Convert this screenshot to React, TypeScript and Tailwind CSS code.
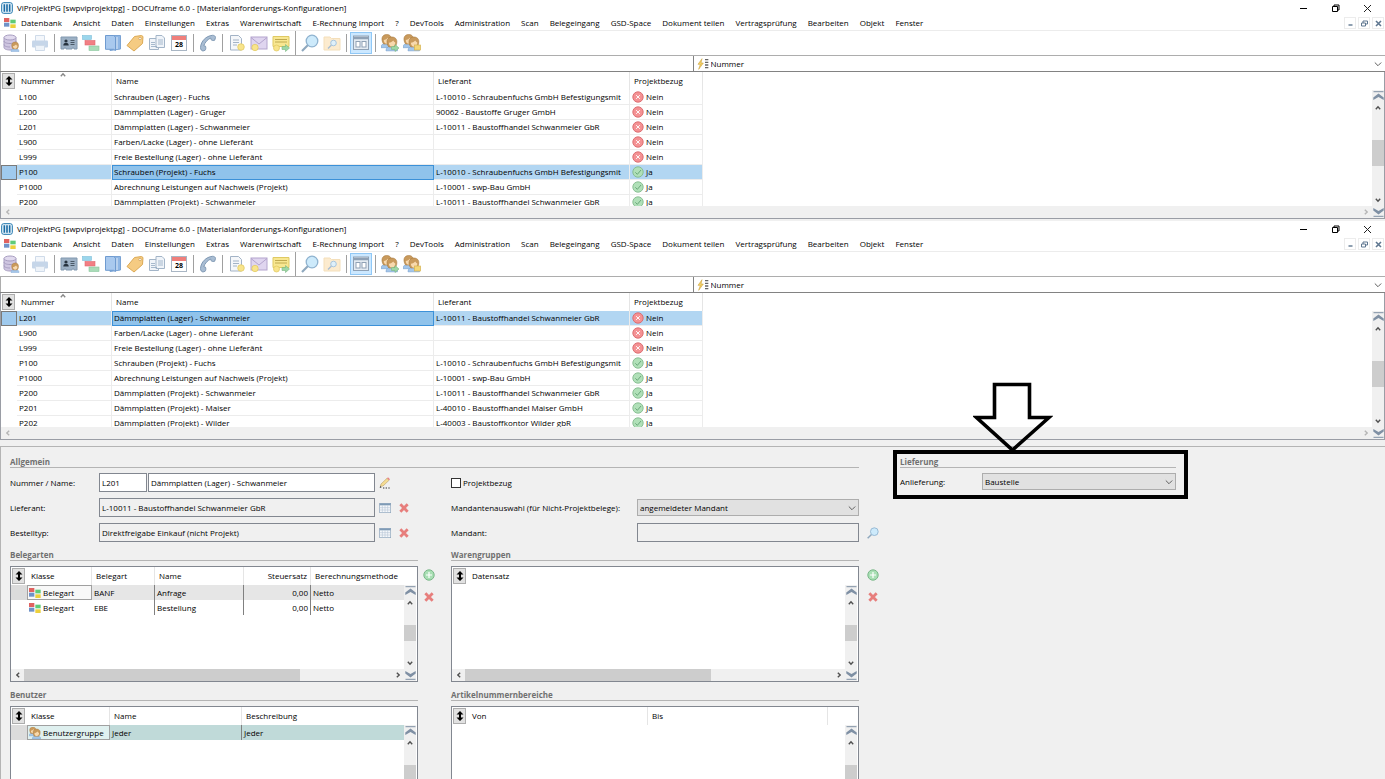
import type { ReactNode } from 'react'
import clsx from 'clsx'

interface Config {
  nummer: string
  name: string
  lieferant: string
  projekt: boolean
}

const configs: Config[] = [
  { nummer: 'L100', name: 'Schrauben (Lager) - Fuchs', lieferant: 'L-10010 - Schraubenfuchs GmbH Befestigungsmit', projekt: false },
  { nummer: 'L200', name: 'Dämmplatten (Lager) - Gruger', lieferant: '90062 - Baustoffe Gruger GmbH', projekt: false },
  { nummer: 'L201', name: 'Dämmplatten (Lager) - Schwanmeier', lieferant: 'L-10011 - Baustoffhandel Schwanmeier GbR', projekt: false },
  { nummer: 'L900', name: 'Farben/Lacke (Lager) - ohne Lieferânt', lieferant: '', projekt: false },
  { nummer: 'L999', name: 'Freie Bestellung (Lager) - ohne Lieferânt', lieferant: '', projekt: false },
  { nummer: 'P100', name: 'Schrauben (Projekt) - Fuchs', lieferant: 'L-10010 - Schraubenfuchs GmbH Befestigungsmit', projekt: true },
  { nummer: 'P1000', name: 'Abrechnung Leistungen auf Nachweis (Projekt)', lieferant: 'L-10001 - swp-Bau GmbH', projekt: true },
  { nummer: 'P200', name: 'Dämmplatten (Projekt) - Schwanmeier', lieferant: 'L-10011 - Baustoffhandel Schwanmeier GbR', projekt: true },
  { nummer: 'P201', name: 'Dämmplatten (Projekt) - Maiser', lieferant: 'L-40010 - Baustoffhandel Maiser GmbH', projekt: true },
  { nummer: 'P202', name: 'Dämmplatten (Projekt) - Wilder', lieferant: 'L-40003 - Baustoffkontor Wilder gbR', projekt: true }
]

const menu = [
  'Datenbank', 'Ansicht', 'Daten', 'Einstellungen', 'Extras', 'Warenwirtschaft',
  'E-Rechnung Import', '?', 'DevTools', 'Administration', 'Scan', 'Belegeingang',
  'GSD-Space', 'Dokument teilen', 'Vertragsprüfung', 'Bearbeiten', 'Objekt', 'Fenster'
]

/* ---------- Icons ---------- */

const Svg = ({ size = 18, children }: { size?: number; children: ReactNode }) => (
  <svg width={size} height={size} viewBox="0 0 18 18" fill="none" className="shrink-0" aria-hidden="true">
    {children}
  </svg>
)

const AppLogo = () => (
  <Svg size={12}>
    <rect x="1" y="1" width="16" height="16" rx="3" fill="#e8f3fa" stroke="#2478ae" strokeWidth="1.5" />
    <path d="M5 3.5v11M9 3.5v11M13 3.5v11" stroke="#1b6ca5" strokeWidth="2.4" />
  </Svg>
)

const Blocks = ({ size = 12 }: { size?: number }) => (
  <Svg size={size}>
    <rect x="0" y="1.500" width="8" height="6" fill="#e0625f" />
    <rect x="0" y="8.500" width="8" height="6" fill="#6f92c8" />
    <rect x="9.500" y="4" width="8" height="5.500" fill="#5fcb78" />
    <rect x="9.500" y="11" width="8" height="5.500" fill="#ecd03c" />
  </Svg>
)

const Person = ({ x, y, s }: { x: number; y: number; s: number }) => (
  <g transform={`translate(${x} ${y}) scale(${s})`}>
    <path d="M0 12c0-3 2-4 5-4s5 1 5 4z" fill="#a3c6ea" stroke="#7ba5d2" strokeWidth=".6" />
    <path d="M1 5.500C.3 1.800 2.500 0 5.200 0s4.800 1.800 4.100 5.500c-.3 1.800-1 2.700-1.800 3.200h-5C1.800 8 1.200 7 1 5.500z" fill="#c99a5c" stroke="#a87a41" strokeWidth=".5" />
    <path d="M2.500 5c1.500-.2 3-.9 3.800-2 .5.900 1 1.500 1.800 1.800 0 2-1.200 3.700-2.800 3.700S2.500 7 2.500 5z" fill="#f8d9ae" />
  </g>
)

const DatabaseIcon = () => (
  <Svg>
    <path d="M2 3.500v10C2 15 4.500 16 8 16s6-1 6-2.500v-10" fill="#cfc6e1" stroke="#a79dc0" />
    <ellipse cx="8" cy="3.500" rx="6" ry="2.500" fill="#e1daee" stroke="#a79dc0" />
    <path d="M2 7c0 1.500 2.500 2.500 6 2.500s6-1 6-2.500M2 10.500C2 12 4.500 13 8 13" stroke="#a79dc0" />
    <Person x={9} y={8} s={0.8} />
  </Svg>
)

const PrinterIcon = () => (
  <Svg>
    <path d="M4.500 1.500h9v6h-9z" fill="#f4f7fb" stroke="#cfdbe9" />
    <rect x="1" y="6.500" width="16" height="7" rx="1" fill="#c6d6e9" />
    <path d="M4.500 11.500h9v5h-9z" fill="#eef3f9" stroke="#cfdbe9" />
  </Svg>
)

const IdCardIcon = () => (
  <Svg>
    <path d="M1 3h16v12h-3v-1h-2v1H6v-1H4v1H1z" fill="#9db1c5" stroke="#8299b0" />
    <circle cx="6" cy="7" r="1.600" fill="#26323e" />
    <path d="M3.300 11.500c0-2 1-2.500 2.700-2.500s2.700.5 2.700 2.500z" fill="#26323e" />
    <path d="M10.500 6.500h4M10.500 8.500h4M10.500 10.500h4" stroke="#4a5967" />
  </Svg>
)

const LayersIcon = () => (
  <Svg>
    <rect x=".5" y="1.500" width="9" height="4" fill="#9bd6ec" stroke="#7dbfd9" strokeWidth=".6" />
    <rect x="3" y="6.500" width="10" height="4.500" fill="#f27f84" stroke="#e0686e" strokeWidth=".6" />
    <rect x="7" y="12" width="10" height="4.500" fill="#a9dcb8" stroke="#88c69c" strokeWidth=".6" />
  </Svg>
)

const BookIcon = () => (
  <Svg>
    <path d="M6 1.500h10.500v13.500L6 16.500z" fill="#8fb6e4" stroke="#7aa3d4" />
    <path d="M1.500 1.500h8l2 1.500v13.500l-2-1.200h-8z" fill="#a9c9ee" stroke="#6f9bd0" />
    <path d="M13 3v12" stroke="#dfeaf7" />
  </Svg>
)

const TagIcon = () => (
  <Svg>
    <path d="M1 11.500L8.500 2.500 15.500 1.500l1.500 1-.5 7L8 17z" fill="#f5cb82" stroke="#dba954" />
    <circle cx="14" cy="4.500" r="1.200" fill="#fff" stroke="#c08c3b" strokeWidth=".6" />
  </Svg>
)

const CopyIcon = () => (
  <Svg>
    <path d="M1.500 4.500h7l2 2v9h-9z" fill="#f0f4f9" stroke="#a3b5c8" />
    <path d="M8 1.500h6l2.500 2.500v9.500H8z" fill="#f0f4f9" stroke="#a3b5c8" />
    <path d="M10 6h5M10 8h5M10 10h5M3 8.500h4M3 10.500h4M3 12.500h6" stroke="#93a9c1" strokeWidth=".8" />
  </Svg>
)

const CalendarIcon = () => (
  <span className="flex h-4 w-4 flex-col border border-[#a9b6c4] bg-white">
    <span className="h-1 bg-[#f07f7b]" />
    <span className="text-center text-[7px] leading-[10px] font-bold">28</span>
  </span>
)

const PhoneIcon = () => (
  <Svg>
    <path
      d="M1.500 13.500C2 7 7 2 13.500 1.300c1.500 0 3 .7 3 2.200l-.8 2.700c-1 .6-2.700.3-3.700-.6l-.3-1.600C8.500 5.500 5.800 8.500 4.800 11.700l1.700.5c.5 1.300.4 3-.3 4l-2 .7c-1.500.2-2.800-1.500-2.700-3.400z"
      fill="#a9bdd3"
      stroke="#8099b4"
    />
  </Svg>
)

const DocIcon = () => (
  <Svg>
    <path d="M2.500 1.500h8l3 3v11.500h-11z" fill="#f5f7fa" stroke="#a3b3c6" />
    <path d="M5 6h6M5 8.500h6M5 11h4" stroke="#a3b3c6" />
    <circle cx="13" cy="13" r="3.300" fill="#f8e48c" stroke="#dfc75c" strokeWidth=".7" />
  </Svg>
)

const MailIcon = () => (
  <Svg>
    <rect x="1" y="3" width="16" height="12" fill="#dfd5ef" stroke="#b3a4cd" />
    <path d="M1 3.500l8 6.500 8-6.500" stroke="#b3a4cd" />
    <circle cx="5" cy="13.500" r="3.200" fill="#f8e48c" stroke="#dfc75c" strokeWidth=".7" />
  </Svg>
)

const NoteIcon = () => (
  <Svg>
    <path d="M1 2.500h16v10H1z" fill="#f8e791" stroke="#dfc963" />
    <path d="M3 5.500h12M3 8h12" stroke="#c0aa50" />
    <circle cx="4.500" cy="14" r="3" fill="#f8e48c" stroke="#dfc75c" strokeWidth=".7" />
    <path d="M10 12.500h3.500v-2l4 3.500-4 3.500v-2H10z" fill="#9dd7a5" stroke="#78b782" strokeWidth=".6" />
  </Svg>
)

const SearchIcon = ({ size = 18 }: { size?: number }) => (
  <Svg size={size}>
    <path d="M7.500 10.500L1 17" stroke="#8fa8be" strokeWidth="2.200" />
    <circle cx="11" cy="7" r="5.800" fill="#cdeafb" stroke="#8fb3d0" strokeWidth="1.300" />
  </Svg>
)

const FolderSearchIcon = () => (
  <Svg>
    <path d="M1 3h6l1.500 1.500H17V16H1z" fill="#fcebcf" stroke="#f4dfba" />
    <path d="M8.500 11L5 14.500" stroke="#a9bfd3" strokeWidth="1.500" />
    <circle cx="10.500" cy="9" r="2.800" fill="#dff0fa" stroke="#a9c6de" />
  </Svg>
)

const LayoutIcon = () => (
  <Svg>
    <rect x="1.500" y="2" width="15" height="13.500" fill="#e4ebf2" stroke="#8fa1b5" />
    <path d="M2 4h14" stroke="#8fa1b5" strokeWidth="2.500" />
    <rect x="4" y="7.500" width="4" height="5.500" fill="#fff" stroke="#8fa1b5" />
    <rect x="10" y="7.500" width="4" height="5.500" fill="#fff" stroke="#8fa1b5" />
  </Svg>
)

const UsersIcon = ({ locked = false }: { locked?: boolean }) => (
  <Svg>
    <Person x={0} y={0.5} s={1.1} />
    <Person x={5} y={3} s={1.15} />
    {locked ? (
      <rect x="11.500" y="11" width="6" height="5" fill="#f3d676" stroke="#d6b350" strokeWidth=".7" />
    ) : (
      <path d="M10.500 12.500h3.500v-2l4 3.500-4 3.500v-2h-3.500z" fill="#9dd7a5" stroke="#78b782" strokeWidth=".6" />
    )}
  </Svg>
)

const UserGroupIcon = () => (
  <Svg size={12}>
    <Person x={0} y={0} s={1.1} />
    <Person x={5} y={3} s={1.25} />
  </Svg>
)

const SortFlash = () => (
  <Svg size={12}>
    <path d="M7.500 1L1.500 9.500h3.500L2.500 17l7-9.500H6z" fill="#f5d268" stroke="#c79a2f" strokeWidth=".8" />
    <path d="M12 2.500h5M12 6.500h5M12 10.500h5M12 14.500h5" stroke="#666" strokeWidth="2" />
  </Svg>
)

const StatusIcon = ({ ok }: { ok: boolean }) => (
  <Svg size={12}>
    <circle cx="9" cy="9" r="7.800" fill={ok ? '#b0e0b8' : '#f49294'} stroke={ok ? '#7fb88a' : '#d96568'} strokeWidth="1.300" />
    {ok ? (
      <path d="M5 9.500l3 3 5.500-6.500" stroke="#5f9f70" strokeWidth="1.300" />
    ) : (
      <path d="M6.200 6.200l5.600 5.600M11.800 6.200l-5.600 5.600" stroke="#fff" strokeWidth="1.400" />
    )}
  </Svg>
)

const AddIcon = () => (
  <Svg size={12}>
    <circle cx="9" cy="9" r="7.800" fill="#a9dfb4" stroke="#74b383" strokeWidth="1.400" />
    <path d="M9 4.500v9M4.500 9h9" stroke="#fff" strokeWidth="1.800" />
  </Svg>
)

const DeleteIcon = () => (
  <Svg size={12}>
    <path d="M3.500 3.500l11 11M14.500 3.500l-11 11" stroke="#e77e7c" strokeWidth="4.200" />
  </Svg>
)

const GridIcon = () => (
  <Svg size={12}>
    <rect x="1" y="2" width="16.500" height="14" fill="#f5f8fb" stroke="#8ba3bb" />
    <path d="M1 3.500h16.500" stroke="#7f9bb6" strokeWidth="3" />
    <path d="M5 5v11M9 5v11M13 5v11M1 8.500h16M1 12h16" stroke="#b5c5d5" strokeWidth=".9" />
  </Svg>
)

const PencilIcon = () => (
  <Svg size={12}>
    <path d="M2 14l1-3.500L12 2l3 3-9 8.500z" fill="#f5dc92" stroke="#b8a06a" strokeWidth=".9" />
    <path d="M12 2l1.500-1.500 3 3L15 5z" fill="#e88080" />
    <path d="M1 16.500l1-3 2 2z" fill="#333" />
    <path d="M6 16.500h2M10 16.500h2M14 16.500h2" stroke="#333" strokeWidth="1.600" />
  </Svg>
)

type Direction = 'up' | 'down' | 'left' | 'right'

const rotations: Record<Direction, string> = {
  up: 'rotate-0',
  down: 'rotate-180',
  left: '-rotate-90',
  right: 'rotate-90'
}

const Chevron = ({ dir, className = 'text-[#505050]' }: { dir: Direction; className?: string }) => (
  <svg width="6" height="6" viewBox="0 0 6 6" fill="none" className={clsx(rotations[dir], className)} aria-hidden="true">
    <path d="M.8 4.200L3 1.800l2.200 2.400" stroke="currentColor" strokeWidth="1.400" />
  </svg>
)

const SelectArrow = () => (
  <svg width="8" height="6" viewBox="0 0 8 6" fill="none" aria-hidden="true">
    <path d="M.8 1.500L4 4.700l3.200-3.200" stroke="#606060" />
  </svg>
)

const PageChevron = ({ dir }: { dir: Direction }) => (
  <svg width="11" height="10" viewBox="0 0 11 10" fill="none" className={rotations[dir]} aria-hidden="true">
    <path d="M.5.7h10" stroke="#7f90a4" />
    <path d="M.3 9v-2.500L5.500 2.500l5.200 4V9L5.500 6z" fill="#7f90a4" />
  </svg>
)

/* ---------- Scrollbars ---------- */

const VScroll = ({ thumb }: { thumb: string }) => (
  <div className="flex w-3 shrink-0 flex-col bg-[#f0f0f0]">
    <button aria-label="Zum Anfang" className="flex h-3 items-center justify-center">
      <PageChevron dir="up" />
    </button>
    <button aria-label="Nach oben" className="flex h-3 items-center justify-center">
      <Chevron dir="up" />
    </button>
    <div className="flex-1">
      <div className={clsx('bg-[#cdcdcd]', thumb)} />
    </div>
    <button aria-label="Nach unten" className="flex h-3 items-center justify-center">
      <Chevron dir="down" />
    </button>
    <button aria-label="Zum Ende" className="flex h-3 items-center justify-center">
      <PageChevron dir="down" />
    </button>
  </div>
)

const HScroll = ({ thumb, disabled = false }: { thumb?: string; disabled?: boolean }) => (
  <div className="flex h-3 items-center bg-[#f0f0f0]">
    <button aria-label="Nach links" disabled={disabled} className="flex w-[13px] justify-center">
      <Chevron dir="left" className={disabled ? 'text-[#b5b5b5]' : undefined} />
    </button>
    <div className="h-full flex-1">
      {thumb && <div className={clsx('h-full bg-[#cdcdcd]', thumb)} />}
    </div>
    <button aria-label="Nach rechts" disabled={disabled} className="flex w-[13px] justify-center">
      <Chevron dir="right" className={disabled ? 'text-[#b5b5b5]' : undefined} />
    </button>
  </div>
)

const SortButton = () => (
  <button aria-label="Sortieren" className="mx-px flex h-4 w-[13px] items-center justify-center border border-[#adadad] bg-[#e1e1e1]">
    <svg width="8" height="10" viewBox="0 0 8 10" aria-hidden="true">
      <path d="M4 0l3.500 3.500H5v3h2.500L4 10 .5 6.500H3v-3H.5z" fill="#000" />
    </svg>
  </button>
)

/* ---------- Main window ---------- */

const ToolSep = ({ tall = false }: { tall?: boolean }) => (
  <span className={clsx('mx-[3px] w-px bg-[#a0a0a0]', tall ? 'h-6' : 'h-[18px]')} />
)

const Tool = ({ label, active = false, disabled = false, children }: { label: string; active?: boolean; disabled?: boolean; children: ReactNode }) => (
  <button
    aria-label={label}
    disabled={disabled}
    className={clsx('flex h-[22px] w-[22px] items-center justify-center', active && 'border border-[#90c8f6] bg-[#cce8ff]')}
  >
    {children}
  </button>
)

const Toolbar = () => (
  <div className="flex h-6 items-center">
    <Tool label="Datenbank"><DatabaseIcon /></Tool>
    <ToolSep />
    <Tool label="Drucken" disabled><PrinterIcon /></Tool>
    <ToolSep />
    <Tool label="Adressen"><IdCardIcon /></Tool>
    <Tool label="Ebenen"><LayersIcon /></Tool>
    <Tool label="Buch"><BookIcon /></Tool>
    <Tool label="Artikel"><TagIcon /></Tool>
    <Tool label="Belege"><CopyIcon /></Tool>
    <Tool label="Kalender"><CalendarIcon /></Tool>
    <ToolSep />
    <Tool label="Telefon"><PhoneIcon /></Tool>
    <ToolSep />
    <Tool label="Neues Dokument"><DocIcon /></Tool>
    <Tool label="Neue E-Mail"><MailIcon /></Tool>
    <Tool label="Neue Notiz"><NoteIcon /></Tool>
    <ToolSep tall />
    <Tool label="Suchen"><SearchIcon /></Tool>
    <Tool label="Ordner durchsuchen" disabled><FolderSearchIcon /></Tool>
    <ToolSep />
    <Tool label="Ansicht" active><LayoutIcon /></Tool>
    <ToolSep />
    <Tool label="Benutzer wechseln"><UsersIcon /></Tool>
    <Tool label="Benutzerrechte"><UsersIcon locked /></Tool>
  </div>
)

const headCell = 'border-r border-[#e5e5e5] pl-1 text-left font-normal'
const bodyCell = 'truncate border-r border-b border-[#ececec] pl-[2px] text-clip'

const ConfigWindow = ({ rows, selected }: { rows: Config[]; selected: string }) => (
  <section className="bg-white">
    <header className="flex h-4 items-center pl-px">
      <AppLogo />
      <h1 className="flex-1 pl-1">ViProjektPG [swpviprojektpg] - DOCUframe 6.0 - [Materialanforderungs-Konfigurationen]</h1>
      <div className="flex pr-[2px]">
        <button aria-label="Minimieren" className="flex h-4 w-8 items-center justify-center">
          <svg width="9" height="9" viewBox="0 0 9 9"><path d="M1 4.500h7" stroke="#000" /></svg>
        </button>
        <button aria-label="Wiederherstellen" className="flex h-4 w-8 items-center justify-center">
          <svg width="9" height="9" viewBox="0 0 9 9" fill="none" stroke="#000"><path d="M1.500 2.500h5v5h-5zM3 2.500v-1.500h5v5H6.500" /></svg>
        </button>
        <button aria-label="Schließen" className="flex h-4 w-8 items-center justify-center">
          <svg width="9" height="9" viewBox="0 0 9 9" fill="none" stroke="#222"><path d="M1 1l7 7M8 1L1 8" /></svg>
        </button>
      </div>
    </header>

    <div className="flex h-[15px] items-center border-b border-[#ececec] pr-px pl-1">
      <Blocks />
      <nav className="flex flex-1 gap-[11px] pl-[5px]">
        {menu.map(item => <button key={item}>{item}</button>)}
      </nav>
      <div className="flex gap-[2px] text-[#5f7790]">
        <button aria-label="Fenster minimieren" className="flex h-3 w-3 items-center justify-center border border-[#ececec]">
          <svg width="7" height="7" viewBox="0 0 7 7"><path d="M1.500 5h4" stroke="currentColor" strokeWidth="1.400" /></svg>
        </button>
        <button aria-label="Fenster wiederherstellen" className="flex h-3 w-3 items-center justify-center border border-[#ececec]">
          <svg width="7" height="7" viewBox="0 0 7 7" fill="none" stroke="currentColor"><path d="M.5 3h4v3h-4zM2 3V1h4.500v3H5" /></svg>
        </button>
        <button aria-label="Fenster schließen" className="flex h-3 w-3 items-center justify-center border border-[#ececec]">
          <svg width="7" height="7" viewBox="0 0 7 7"><path d="M1 1l5 5M6 1L1 6" stroke="currentColor" strokeWidth="1.600" /></svg>
        </button>
      </div>
    </div>

    <Toolbar />

    <div className="flex h-[17px] border-t border-b border-t-[#adadad] border-b-[#828282]">
      <input aria-label="Suchbegriff" className="w-1/2 border-l border-[#adadad] px-1 outline-none" />
      <div className="relative flex w-1/2 items-center border-l border-[#828282] pl-[3px]">
        <SortFlash />
        <select aria-label="Suchfeld" className="h-full flex-1 appearance-none pl-[2px] outline-none">
          <option>Nummer</option>
        </select>
        <span className="pointer-events-none absolute right-[3px]">
          <SelectArrow />
        </span>
      </div>
    </div>

    <div className="flex border-x border-b border-[#9a9da5]">
      <div className="min-w-0 flex-1">
        <div className="h-[134px] overflow-hidden">
          <table className="w-[702px] table-fixed border-separate border-spacing-0">
            <colgroup>
              <col className="w-4" />
              <col className="w-[95px]" />
              <col className="w-[322px]" />
              <col className="w-[196px]" />
              <col className="w-[73px]" />
            </colgroup>
            <thead>
              <tr className="h-[18px]">
                <th className="p-0"><SortButton /></th>
                <th className={headCell}>
                  <span className="relative">
                    Nummer
                    <span className="absolute -top-[3px] -right-[11px]"><Chevron dir="up" className="text-[#888]" /></span>
                  </span>
                </th>
                <th className={headCell}>Name</th>
                <th className={headCell}>Lieferant</th>
                <th className={headCell}>Projektbezug</th>
              </tr>
            </thead>
            <tbody>
              {rows.map(row => {
                const active = row.nummer === selected
                return (
                  <tr key={row.nummer} className={clsx('h-[15px]', active && 'bg-[#b2d6f2]')}>
                    <td className={clsx('p-0', active && 'bg-[#9fcaee] outline outline-1 -outline-offset-1 outline-[#7a7a7a]')} />
                    <td className={bodyCell}>{row.nummer}</td>
                    <td className={clsx(bodyCell, active && 'bg-[#90c3eb] outline outline-1 -outline-offset-1 outline-[#3c91d8]')}>
                      {row.name}
                    </td>
                    <td className={bodyCell}>{row.lieferant}</td>
                    <td className={bodyCell}>
                      <span className="flex items-center gap-[2px]">
                        <StatusIcon ok={row.projekt} />
                        {row.projekt ? 'Ja' : 'Nein'}
                      </span>
                    </td>
                  </tr>
                )
              })}
            </tbody>
          </table>
        </div>
        <HScroll disabled />
      </div>
      <div className="flex pt-[18px]">
        <VScroll thumb="mt-[26px] h-[26px]" />
      </div>
    </div>
  </section>
)

/* ---------- Form ---------- */

const Heading = ({ children }: { children: ReactNode }) => (
  <h2 className="border-b border-[#b4b4b4] leading-[11px] font-bold text-[#707070]">{children}</h2>
)

const Picker = ({ children, label }: { children: ReactNode; label: string }) => (
  <button aria-label={label} className="flex w-3 shrink-0 items-center justify-center">{children}</button>
)

const field = 'h-full min-w-0 border border-[#828790] px-[2px] outline-none'

const Select = ({ id, value }: { id: string; value: string }) => (
  <div className="relative flex h-[17px] min-w-0 flex-1 items-center">
    <select id={id} className="h-full w-full appearance-none border border-[#adadad] bg-[#e1e1e1] px-[2px] outline-none">
      <option>{value}</option>
    </select>
    <span className="pointer-events-none absolute right-[3px]">
      <SelectArrow />
    </span>
  </div>
)

const ListBox = ({ children, thumb, sideGap, actions = false }: { children: ReactNode; thumb?: string; sideGap: string; actions?: boolean }) => (
  <div className={clsx('mt-[5px] flex', sideGap)}>
    <div className="flex w-[408px] border border-[#828790] bg-white">
      <div className="min-w-0 flex-1">
        <div className="h-[102px]">{children}</div>
        <HScroll thumb={thumb} />
      </div>
      <div className="flex pt-[18px] pr-px">
        <VScroll thumb="mt-4 h-4" />
      </div>
    </div>
    {actions && (
      <div className="flex flex-col gap-[10px] pt-[3px]">
        <Picker label="Hinzufügen"><AddIcon /></Picker>
        <Picker label="Entfernen"><DeleteIcon /></Picker>
      </div>
    )}
  </div>
)

const belegarten = [
  { art: 'BANF', name: 'Anfrage' },
  { art: 'EBE', name: 'Bestellung' }
]

const Belegarten = () => (
  <table className="w-full table-fixed border-separate border-spacing-0">
    <colgroup>
      <col className="w-4" />
      <col className="w-[65px]" />
      <col className="w-[63px]" />
      <col className="w-[89px]" />
      <col className="w-[67px]" />
      <col />
    </colgroup>
    <thead>
      <tr className="h-[18px]">
        <th className="p-0"><SortButton /></th>
        <th className={headCell}>Klasse</th>
        <th className={headCell}>Belegart</th>
        <th className={headCell}>Name</th>
        <th className="border-r border-[#e5e5e5] pr-[3px] text-right font-normal">Steuersatz</th>
        <th className="pl-1 text-left font-normal">Berechnungsmethode</th>
      </tr>
    </thead>
    <tbody>
      {belegarten.map((row, i) => (
        <tr key={row.art} className={clsx('h-[15px]', i === 0 && 'bg-[#e6e6e6]')}>
          <td className={clsx(i === 0 && 'bg-[#dcdcdc]')} />
          <td className={clsx('pl-[2px]', i === 0 && 'bg-[#f8f8f8] outline outline-1 -outline-offset-1 outline-[#a0a0a0]')}>
            <span className="flex items-center gap-[2px]">
              <Blocks />
              Belegart
            </span>
          </td>
          <td className="border-r border-[#808080] pl-[2px]">{row.art}</td>
          <td className="border-r border-[#808080] pl-[2px]">{row.name}</td>
          <td className="border-r border-[#808080] pr-[2px] text-right">0,00</td>
          <td className="pl-[2px]">Netto</td>
        </tr>
      ))}
    </tbody>
  </table>
)

const Benutzer = () => (
  <table className="w-full table-fixed border-separate border-spacing-0">
    <colgroup>
      <col className="w-4" />
      <col className="w-[83px]" />
      <col className="w-[132px]" />
      <col />
    </colgroup>
    <thead>
      <tr className="h-[18px]">
        <th className="p-0"><SortButton /></th>
        <th className={headCell}>Klasse</th>
        <th className={headCell}>Name</th>
        <th className="pl-1 text-left font-normal">Beschreibung</th>
      </tr>
    </thead>
    <tbody>
      <tr className="h-[15px] bg-[#c0dad9]">
        <td className="bg-[#dcdcdc]" />
        <td className="bg-[#dff0ef] pl-[2px] outline outline-1 -outline-offset-1 outline-[#a0a0a0]">
          <span className="flex items-center gap-[2px]">
            <UserGroupIcon />
            Benutzergruppe
          </span>
        </td>
        <td className="border-r border-[#808080] pl-[2px]">Jeder</td>
        <td className="pl-[2px]">Jeder</td>
      </tr>
    </tbody>
  </table>
)

const ConfigForm = () => (
  <form className="flex flex-1 border-t border-l border-[#b4b4b4] bg-[#f0f0f0] pt-[9px] pl-[9px]" onSubmit={e => e.preventDefault()}>
    <div>
      <div className="w-[849px]">
        <Heading>Allgemein</Heading>
      </div>

      <div className="flex">
        <div className="w-[441px]">
          <div className="mt-[5px] flex flex-col gap-[6px]">
            <div className="flex h-[19px] items-center">
              <label htmlFor="nummer" className="w-[89px]">Nummer / Name:</label>
              <input id="nummer" defaultValue="L201" className={clsx(field, 'mr-px w-12 bg-white')} />
              <input aria-label="Name" defaultValue="Dämmplatten (Lager) - Schwanmeier" className={clsx(field, 'mr-1 w-[227px] bg-white')} />
              <Picker label="Bearbeiten"><PencilIcon /></Picker>
            </div>
            <div className="flex h-[19px] items-center">
              <label htmlFor="lieferant" className="w-[89px]">Lieferant:</label>
              <input id="lieferant" readOnly defaultValue="L-10011 - Baustoffhandel Schwanmeier GbR" className={clsx(field, 'mr-1 w-[276px]')} />
              <div className="flex gap-[7px]">
                <Picker label="Lieferant auswählen"><GridIcon /></Picker>
                <Picker label="Lieferant entfernen"><DeleteIcon /></Picker>
              </div>
            </div>
            <div className="flex h-[19px] items-center">
              <label htmlFor="bestelltyp" className="w-[89px]">Bestelltyp:</label>
              <input id="bestelltyp" readOnly defaultValue="Direktfreigabe Einkauf (nicht Projekt)" className={clsx(field, 'mr-1 w-[276px]')} />
              <div className="flex gap-[7px]">
                <Picker label="Bestelltyp auswählen"><GridIcon /></Picker>
                <Picker label="Bestelltyp entfernen"><DeleteIcon /></Picker>
              </div>
            </div>
          </div>

          <div className="mt-[7px] w-[408px]"><Heading>Belegarten</Heading></div>
          <ListBox thumb="w-[276px]" sideGap="gap-[5px]" actions><Belegarten /></ListBox>

          <div className="mt-[7px] w-[408px]"><Heading>Benutzer</Heading></div>
          <ListBox sideGap="gap-[5px]"><Benutzer /></ListBox>
        </div>

        <div className="w-[449px]">
          <div className="mt-[5px] flex flex-col gap-[6px]">
            <label className="flex h-[19px] items-center gap-[2px]">
              <input type="checkbox" className="h-[10px] w-[10px] appearance-none border border-[#333] bg-white" />
              Projektbezug
            </label>
            <div className="flex h-[19px] w-[408px] items-center">
              <label htmlFor="mandantenauswahl" className="w-[186px]">Mandantenauswahl (für Nicht-Projektbelege):</label>
              <Select id="mandantenauswahl" value="angemeldeter Mandant" />
            </div>
            <div className="flex h-[19px] items-center">
              <label htmlFor="mandant" className="w-[186px]">Mandant:</label>
              <input id="mandant" readOnly className={clsx(field, 'mr-2 w-[222px]')} />
              <Picker label="Mandant suchen"><SearchIcon size={12} /></Picker>
            </div>
          </div>

          <div className="mt-[7px] w-[408px]"><Heading>Warengruppen</Heading></div>
          <ListBox thumb="w-[246px]" sideGap="gap-2" actions>
            <table className="w-full table-fixed border-separate border-spacing-0">
              <thead>
                <tr className="h-[18px]">
                  <th className="w-4 p-0"><SortButton /></th>
                  <th className="pl-1 text-left font-normal">Datensatz</th>
                </tr>
              </thead>
            </table>
          </ListBox>

          <div className="mt-[7px] w-[408px]"><Heading>Artikelnummernbereiche</Heading></div>
          <ListBox sideGap="gap-2">
            <table className="w-full table-fixed border-separate border-spacing-0">
              <thead>
                <tr className="h-[18px]">
                  <th className="w-4 p-0"><SortButton /></th>
                  <th className={clsx(headCell, 'w-[180px]')}>Von</th>
                  <th className={clsx(headCell, 'w-[180px]')}>Bis</th>
                  <th />
                </tr>
              </thead>
            </table>
          </ListBox>
        </div>
      </div>
    </div>

    <div className="relative w-[276px] self-start">
      <Heading>Lieferung</Heading>
      <div className="mt-[5px] flex items-center">
        <label htmlFor="anlieferung" className="w-[82px]">Anlieferung:</label>
        <Select id="anlieferung" value="Baustelle" />
      </div>

      {/* Hervorhebung */}
      <div className="pointer-events-none absolute -top-[6px] -right-3 -bottom-[9px] -left-[7px] border-4 border-black" />
      <svg width="80" height="72" viewBox="0 0 80 72" fill="none" className="pointer-events-none absolute -top-[75px] left-[73px]" aria-hidden="true">
        <path d="M21.500 3.500h35v33h19.500L39.500 69 3.500 36.500h18z" stroke="#000" strokeWidth="3.600" />
      </svg>
    </div>
  </form>
)

export default function App() {
  return (
    <main className="flex h-screen flex-col overflow-hidden bg-[#f0f0f0] font-['Open_Sans','Noto_Sans',sans-serif] text-[8px] leading-[12px] text-black">
      <ConfigWindow rows={configs.slice(0, 8)} selected="P100" />
      <div className="mt-[2px] mb-[6px]">
        <ConfigWindow rows={configs.slice(2)} selected="L201" />
      </div>
      <ConfigForm />
    </main>
  )
}
